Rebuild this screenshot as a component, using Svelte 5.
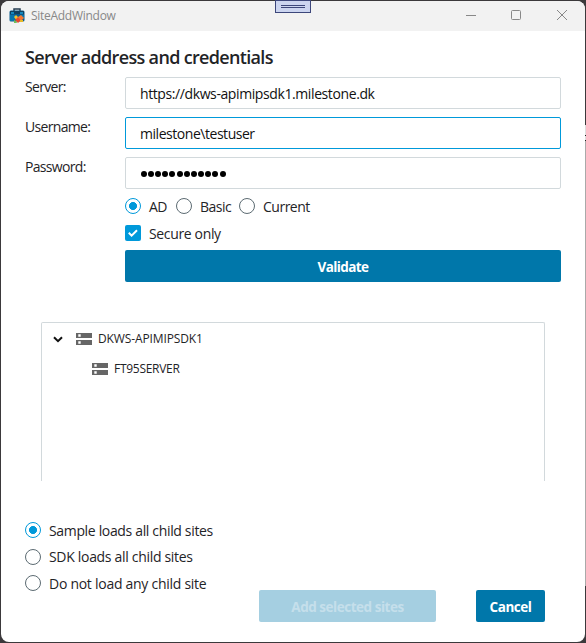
<script>
  let auth = $state('AD');
  let loading = $state('sample');
  const methods = [
    { id: 'AD', width: 51 },
    { id: 'Basic', width: 63 },
    { id: 'Current', width: 80 }
  ];
  const modes = [
    { id: 'sample', label: 'Sample loads all child sites', spacing: -0.34 },
    { id: 'sdk', label: 'SDK loads all child sites', spacing: -0.31 },
    { id: 'none', label: 'Do not load any child site', spacing: -0.27 }
  ];
</script>

{#snippet serverIcon()}
  <svg class="server" width="16" height="12" viewBox="0 0 16 12">
    <path fill="#666" d="M0 0h16v5H0zM0 7h16v5H0z" />
    <path fill="#fff" d="M2.3 1.3h2.4v2.4h-2.4zM2.3 8.3h2.4v2.4h-2.4z" />
  </svg>
{/snippet}

<div class="desktop">
  <div class="edge"></div>
  <div class="window">
    <header>
      <svg class="logo" width="16" height="16" viewBox="0 0 16 16">
        <path d="M5 3V1h6v2" fill="none" stroke="#263d50" stroke-width="1.5" />
        <rect x="0.5" y="2.5" width="15" height="11" rx="1.5" fill="#075a8c" />
        <path d="M1 3h14v3H1z" fill="#11405f" />
        <path d="M2 4h3v2H2zM11 4h3v2h-3z" fill="#1688bd" />
        <path d="M1 7h5v6H1zM11 7h4v3h-4z" fill="#0875ac" />
        <path d="M5 9l2-2 3 3-2 3z" fill="#f0c52d" />
        <path d="M6 12l3-3 3 3-3 3z" fill="#e8472e" />
        <path d="M9 9l3-2 3 3-3 3z" fill="#f57832" />
        <path d="M5 12l2 1 1 2H5z" fill="#70bd57" />
        <path d="M11 12h3v2h-3z" fill="#e7b929" />
      </svg>
      <span class="caption">SiteAddWindow</span>
      <svg class="controls" width="104" height="12" viewBox="0 0 104 12" fill="none" stroke="#888">
        <path d="M1 6.5h10" />
        <rect x="46.5" y="1.5" width="9" height="9" rx="1" />
        <path d="M92 1l10 10M102 1L92 11" />
      </svg>
    </header>

    <main>
      <h1>Server address and credentials</h1>
      <div class="field"><label for="server">Server:</label><div id="server" class="input url">https://dkws-apimipsdk1.milestone.dk</div></div>
      <div class="field"><label for="user">Username:</label><div id="user" class="input focused">milestone\testuser</div></div>
      <div class="field"><label for="password">Password:</label>
        <div id="password" class="input dots">{#each Array(12) as _}<i></i>{/each}</div>
      </div>

      <div class="methods">
        {#each methods as m}
          <button class="choice" style:width="{m.width}px" onclick={() => (auth = m.id)}>
            <span class="radio" class:on={auth === m.id}></span><span class="text">{m.id}</span>
          </button>
        {/each}
      </div>
      <div class="choice secure">
        <svg width="16" height="16" viewBox="0 0 16 16"><rect width="16" height="16" rx="2" fill="#0099da" /><path d="M3.8 7.8l2.8 2.8 5.4-5.4" fill="none" stroke="#fff" stroke-width="2" /></svg>
        <span class="text">Secure only</span>
      </div>
      <button class="primary validate">Validate</button>

      <section class="tree">
        <div class="node">
          <svg class="chevron" width="10" height="7" viewBox="0 0 10 7"><path d="M1 1.2l4 4 4-4" fill="none" stroke="#111" stroke-width="2" /></svg>
          {@render serverIcon()}<span class="host">DKWS-APIMIPSDK1</span>
        </div>
        <div class="node child">{@render serverIcon()}<span class="host ft">FT95SERVER</span></div>
      </section>

      <div class="modes">
        {#each modes as m}
          <button class="choice" onclick={() => (loading = m.id)}>
            <span class="radio" class:on={loading === m.id}></span><span class="text" style:letter-spacing="{m.spacing}px">{m.label}</span>
          </button>
        {/each}
      </div>
      <footer>
        <button class="primary add" disabled>Add selected sites</button>
        <button class="primary cancel">Cancel</button>
      </footer>
    </main>
  </div>
  <div class="handle"><span></span></div>
</div>

<style>
  :global(body) { background: #333; overflow: hidden; }
  * { box-sizing: border-box; }
  .desktop { position: relative; width: 586px; height: 643px; padding: 1px; background: #3b393b; overflow: hidden; font: 14px/20px "Open Sans", "Noto Sans", sans-serif; letter-spacing: -0.3px; color: #1f2427; }
  .edge { position: absolute; right: 0; top: 125px; width: 1px; height: 461px; background: linear-gradient(#ddd 10px, #222 10px 11px, #ddd 11px 15px, #222 15px 16px, #aaa 16px); }
  .window { width: 584px; height: 641px; border-radius: 8px; overflow: hidden; background: #fff; }
  header { height: 30px; display: flex; align-items: center; padding: 0 16px 0 8px; background: #f2f2f2; }
  .logo { flex: none; }
  .caption { margin-left: 6px; font-size: 12px; color: #888; letter-spacing: -0.28px; }
  .controls { margin: 0 0 2px auto; }
  .handle { position: absolute; left: 275px; top: 0; width: 36px; height: 13px; border: 1px solid #3d477b; background: #ccd5f0; padding: 4px 5px; }
  .handle span { display: block; height: 3px; border: solid #3d477b; border-width: 1px 0; }
  main { padding: 15px 24px 0; }
  h1 { margin: 0; height: 31px; font-size: 18px; line-height: 23px; font-weight: 600; letter-spacing: -0.67px; white-space: nowrap; }
  .field { display: flex; height: 32px; margin-bottom: 8px; }
  label { width: 100px; letter-spacing: -0.68px; }
  .input { width: 436px; height: 32px; padding: 6px 14px; border: 1px solid #d2d9dc; border-radius: 2px; color: #111; white-space: nowrap; letter-spacing: -0.4px; }
  .focused { border-color: #0099da; letter-spacing: -0.46px; }
  .dots { display: flex; align-items: center; gap: 1.25px; padding-top: 7px; padding-left: 15px; }
  .dots i { width: 6px; height: 6px; border-radius: 50%; background: #000; }
  .dots { gap: 1.2px; padding-left: 14.6px; }
  button { font: inherit; letter-spacing: inherit; color: inherit; border: 0; margin: 0; padding: 0; background: none; text-align: left; }
  .methods { display: flex; height: 20px; margin: -1px 0 0 100px; letter-spacing: -0.5px; }
  .choice { display: flex; align-items: flex-start; height: 20px; white-space: nowrap; }
  .choice .text { margin: 1px 0 0 8px; }
  .radio { flex: none; width: 16px; height: 16px; border: 1.3px solid #5c6b72; border-radius: 50%; margin-top: 2px; }
  .on { border-color: #0099da; background: radial-gradient(circle, #0099da 3.7px, transparent 4.3px); }
  .secure { margin: 8px 0 0 100px; height: 26px; letter-spacing: -0.35px; }
  .secure svg { margin-top: 1px; }
  .primary { height: 32px; border-radius: 2px; background: #0077aa; color: #fff; font-size: 13.5px; font-weight: 700; letter-spacing: -0.47px; text-align: center; white-space: nowrap; }
  .secure .text { margin-top: 0; }
  .validate { display: block; width: 436px; margin-left: 100px; padding-top: 2px; letter-spacing: -0.6px; }
  .tree { width: 504px; height: 159px; margin: 40px 16px 0; border: 1px solid #d2d9dc; border-bottom: 0; border-radius: 2px 2px 0 0; padding-top: 1px; font-size: 12px; }
  .node { display: flex; align-items: center; height: 30px; padding-left: 11px; }
  .chevron { margin-right: 13px; }
  .server { margin-bottom: 1px; }
  .host { margin-left: 6px; letter-spacing: -0.12px; }
  .ft { letter-spacing: -0.28px; }
  .child { padding-left: 50px; }
  .modes { height: 72px; margin-top: 39px; }
  .modes .choice { height: 26.5px; }
  .modes .choice:nth-child(2) .text { margin-top: 0; }
  footer { display: flex; justify-content: flex-end; gap: 40px; margin-top: -2px; padding-right: 16px; }
  footer .primary { padding-top: 2px; }
  .add { width: 177px; background: #a5cfe1; color: #c5dfeb; }
  .cancel { width: 69px; }
</style>
